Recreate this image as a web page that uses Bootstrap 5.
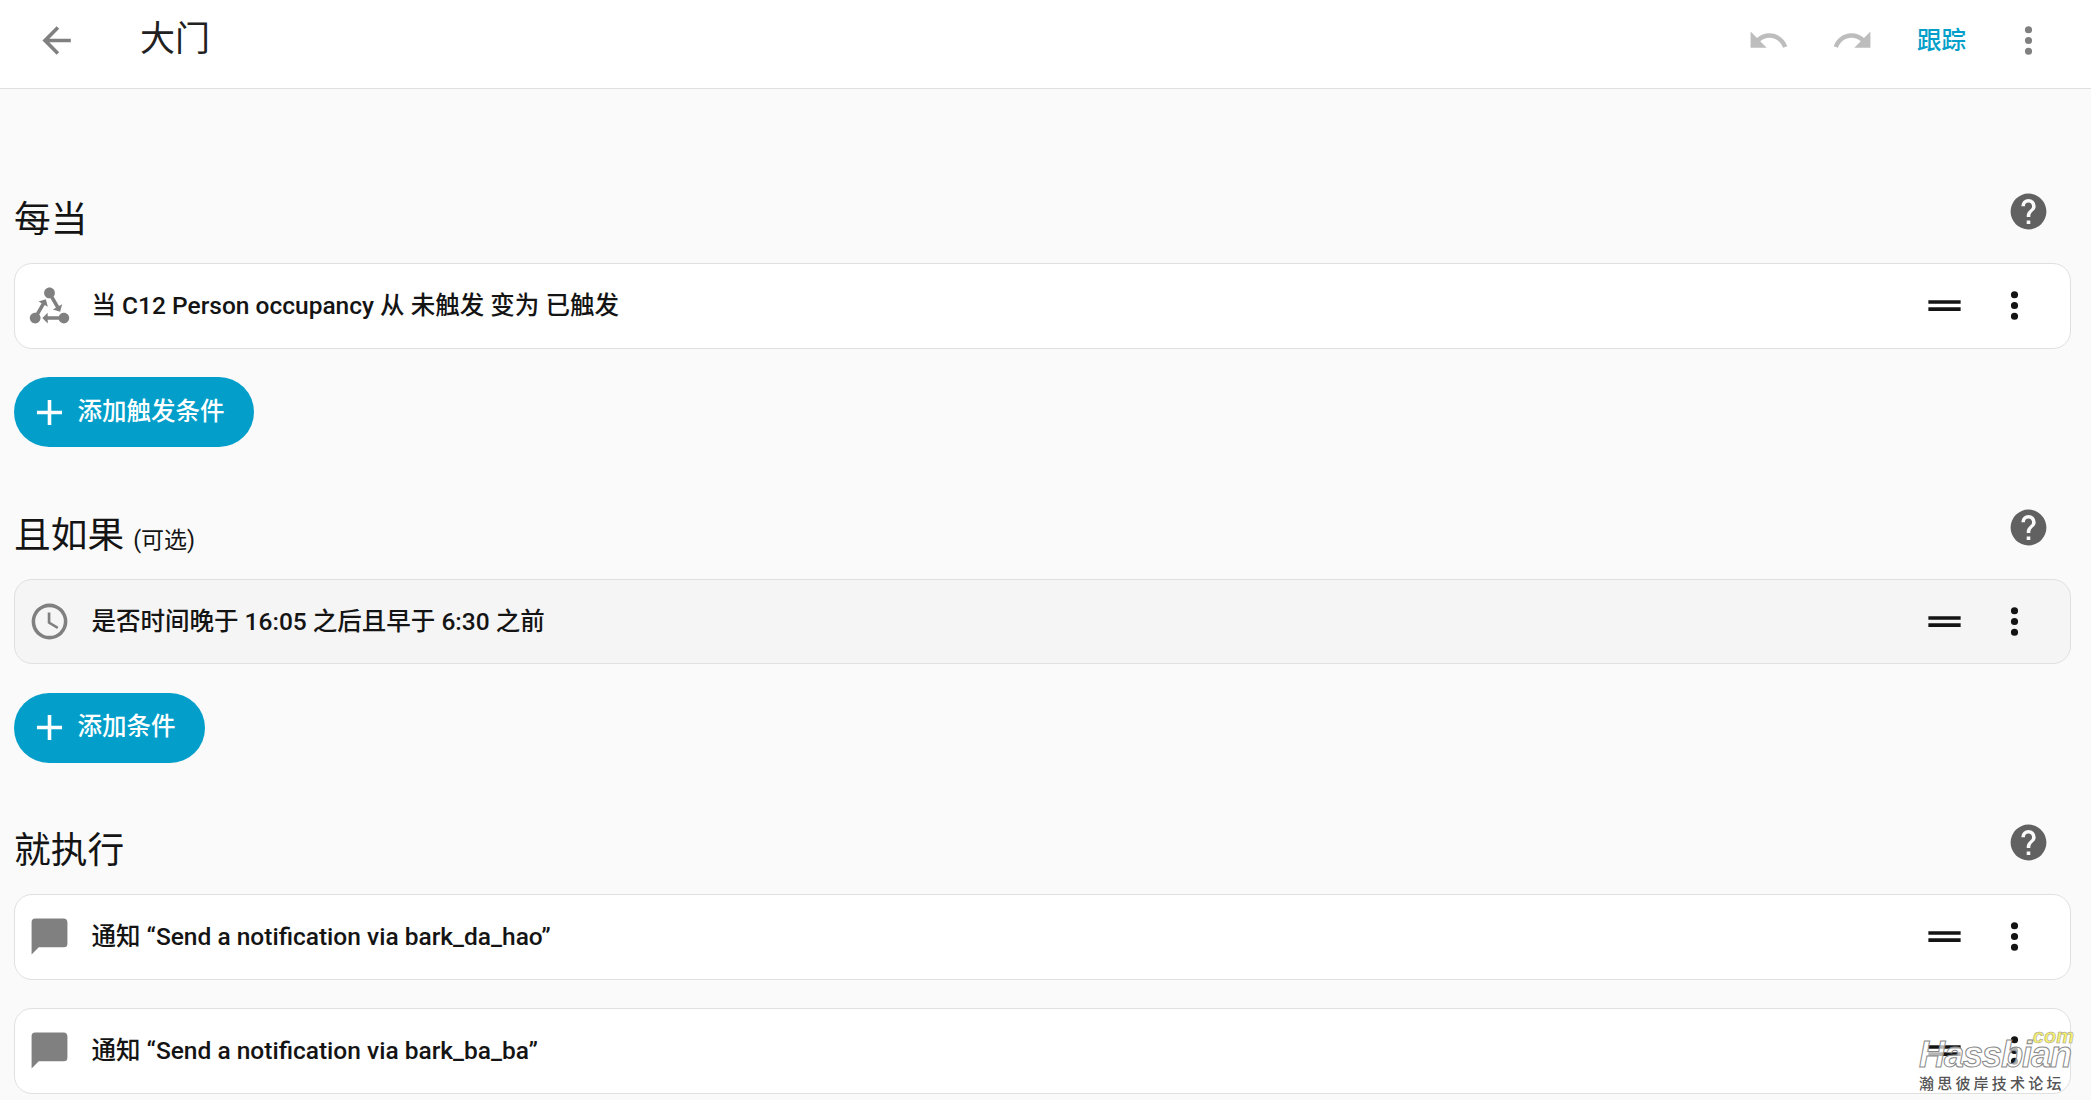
<!DOCTYPE html>
<html lang="zh-CN">
<head>
<meta charset="UTF-8">
<title>大门</title>
<link href="https://cdn.jsdelivr.net/npm/bootstrap@5.3.2/dist/css/bootstrap.min.css" rel="stylesheet">
<style>
html, body { height: 1100px; overflow: hidden; }
body { background: #fff; font-family: Roboto, "Noto Sans CJK SC", sans-serif; color: #141414; }
.app-shell { width: 2091px; height: 1100px; background: #fafafa; overflow: hidden; position: relative; border-top-right-radius: 6px; }
.top-bar { height: 89px; background: #fff; border-bottom: 1px solid #e0e0e0; padding: 0 41.5px 8px 34.5px; }
.top-title { font-size: 35px; font-weight: 400; margin: 0 0 0 62.5px; color: #212121; line-height: 40px; }
.ic { width: 43px; height: 43px; fill: currentColor; flex: none; display: block; }
.ic-muted { color: #808080; }
.ic-off { color: #bdbdbd; }
.ic-dark { color: #141414; }
.ic-help { color: #616161; margin-top: -4px; }
.hist-gap { margin-left: 41px; }
.trace-link { color: #039fca; font-size: 24.5px; font-weight: 500; text-decoration: none; margin: 2px 40.5px 0 43.5px; line-height: 1; }
.page-main { padding: 105px 20px 0 14px; }
.block-head { margin-bottom: 18px; padding-right: 21.5px; }
.block-title { font-size: 36.7px; line-height: 50px; font-weight: 400; margin: 1px 0 0; color: #141414; }
.block-title small { font-size: 23px; font-weight: 400; line-height: 1; }
.rule-row { height: 85.5px; background: #fff; border: 1.5px solid #e0e0e0; border-radius: 18px; margin-bottom: 28.5px; padding: 0 34px 0 13px; font-size: 24.5px; font-weight: 500; }
.rule-row.row-alt { background: #f5f5f5; }
.rule-text { margin-left: 20.5px; padding-top: 2px; }
.rule-drag { margin-right: 27px; }
.add-btn { height: 70px; width: fit-content; border-radius: 35px; background: #039fca; color: #fff; border: 0; font-size: 24.5px; font-weight: 500; padding: 0 29px 0 14px; }
.add-btn .ic { margin-right: 6.5px; }
.add-btn:hover { background: #039fca; color: #fff; }
.block-sec { margin-bottom: 62.5px; }
.wm-box { position: absolute; right: 17px; bottom: 8px; width: 155px; color: #666; }
.wm-com { font: italic 700 20px/12px "Liberation Sans", sans-serif; color: #f6f06c; -webkit-text-stroke: .5px #999; text-align: right; }
.wm-name { font: italic 700 36px/26px "Liberation Sans", sans-serif; color: rgba(255,255,255,.7); -webkit-text-stroke: 1px #888; letter-spacing: -1px; white-space: nowrap; }
.wm-sub { font: 500 15px/18px "Noto Sans CJK SC", sans-serif; letter-spacing: 3.2px; margin-top: 6px; color: #555; white-space: nowrap; }
</style>
</head>
<body>
<div class="app-shell">
    <header class="top-bar d-flex align-items-center">
        <svg class="ic ic-muted" viewBox="0 0 24 24"><path d="M20,11V13H8L13.5,18.5L12.08,19.92L4.16,12L12.08,4.08L13.5,5.5L8,11H20Z"/></svg>
        <h1 class="top-title">大门</h1>
        <div class="ms-auto d-flex align-items-center">
            <svg class="ic ic-off" viewBox="0 0 24 24"><path d="M12.5,8C9.85,8 7.45,9 5.6,10.6L2,7V16H11L7.38,12.38C8.77,11.22 10.54,10.5 12.5,10.5C16.04,10.5 19.05,12.81 20.1,16L22.47,15.22C21.08,11.03 17.15,8 12.5,8Z"/></svg>
            <svg class="ic ic-off hist-gap" viewBox="0 0 24 24"><path d="M18.4,10.6C16.55,9 14.15,8 11.5,8C6.85,8 2.92,11.03 1.54,15.22L3.9,16C4.95,12.81 7.95,10.5 11.5,10.5C13.45,10.5 15.23,11.22 16.62,12.38L13,16H22V7L18.4,10.6Z"/></svg>
            <a class="trace-link" href="#">跟踪</a>
            <svg class="ic ic-muted" viewBox="0 0 24 24"><path d="M12,16A2,2 0 0,1 14,18A2,2 0 0,1 12,20A2,2 0 0,1 10,18A2,2 0 0,1 12,16M12,10A2,2 0 0,1 14,12A2,2 0 0,1 12,14A2,2 0 0,1 10,12A2,2 0 0,1 12,10M12,4A2,2 0 0,1 14,6A2,2 0 0,1 12,8A2,2 0 0,1 10,6A2,2 0 0,1 12,4Z"/></svg>
        </div>
    </header>

    <main class="page-main">
        <section class="block-sec">
            <div class="block-head d-flex justify-content-between align-items-start">
                <h2 class="block-title">每当</h2>
                <svg class="ic ic-help" viewBox="0 0 24 24"><path d="M15.07,11.25L14.17,12.17C13.45,12.89 13,13.5 13,15H11V14.5C11,13.39 11.45,12.39 12.17,11.67L13.41,10.41C13.78,10.05 14,9.55 14,9C14,7.89 13.1,7 12,7A2,2 0 0,0 10,9H8A4,4 0 0,1 12,5A4,4 0 0,1 16,9C16,9.88 15.64,10.67 15.07,11.25M13,19H11V17H13M12,2A10,10 0 0,0 2,12A10,10 0 0,0 12,22A10,10 0 0,0 22,12C22,6.47 17.5,2 12,2Z"/></svg>
            </div>
            <div class="rule-row d-flex align-items-center">
                <svg class="ic ic-muted" viewBox="0 0 24 24"><path d="M6.27 17.05C6.72 17.58 7 18.25 7 19C7 20.66 5.66 22 4 22S1 20.66 1 19 2.34 16 4 16C4.18 16 4.36 16 4.53 16.05L7.6 10.69L5.86 9.7L9.95 8.58L11.07 12.67L9.33 11.68L6.27 17.05M20 16C18.7 16 17.6 16.84 17.18 18H11V16L8 19L11 22V20H17.18C17.6 21.16 18.7 22 20 22C21.66 22 23 20.66 23 19S21.66 16 20 16M12 8C12.18 8 12.36 8 12.53 7.95L15.6 13.31L13.86 14.3L17.95 15.42L19.07 11.33L17.33 12.32L14.27 6.95C14.72 6.42 15 5.75 15 5C15 3.34 13.66 2 12 2S9 3.34 9 5 10.34 8 12 8Z"/></svg>
                <span class="rule-text">当 C12 Person occupancy 从 未触发 变为 已触发</span>
                <svg class="ic ic-dark ms-auto rule-drag" viewBox="0 0 24 24"><path d="M21 11H3V9H21V11M21 13H3V15H21V13Z"/></svg>
                <svg class="ic ic-dark" viewBox="0 0 24 24"><path d="M12,16A2,2 0 0,1 14,18A2,2 0 0,1 12,20A2,2 0 0,1 10,18A2,2 0 0,1 12,16M12,10A2,2 0 0,1 14,12A2,2 0 0,1 12,14A2,2 0 0,1 10,12A2,2 0 0,1 12,10M12,4A2,2 0 0,1 14,6A2,2 0 0,1 12,8A2,2 0 0,1 10,6A2,2 0 0,1 12,4Z"/></svg>
            </div>
            <button class="btn add-btn d-flex align-items-center" type="button">
                <svg class="ic" viewBox="0 0 24 24"><path d="M19,13H13V19H11V13H5V11H11V5H13V11H19V13Z"/></svg>添加触发条件
            </button>
        </section>

        <section class="block-sec">
            <div class="block-head d-flex justify-content-between align-items-start">
                <h2 class="block-title">且如果 <small>(可选)</small></h2>
                <svg class="ic ic-help" viewBox="0 0 24 24"><path d="M15.07,11.25L14.17,12.17C13.45,12.89 13,13.5 13,15H11V14.5C11,13.39 11.45,12.39 12.17,11.67L13.41,10.41C13.78,10.05 14,9.55 14,9C14,7.89 13.1,7 12,7A2,2 0 0,0 10,9H8A4,4 0 0,1 12,5A4,4 0 0,1 16,9C16,9.88 15.64,10.67 15.07,11.25M13,19H11V17H13M12,2A10,10 0 0,0 2,12A10,10 0 0,0 12,22A10,10 0 0,0 22,12C22,6.47 17.5,2 12,2Z"/></svg>
            </div>
            <div class="rule-row row-alt d-flex align-items-center">
                <svg class="ic ic-muted" viewBox="0 0 24 24"><path d="M12,20A8,8 0 0,0 20,12A8,8 0 0,0 12,4A8,8 0 0,0 4,12A8,8 0 0,0 12,20M12,2A10,10 0 0,1 22,12A10,10 0 0,1 12,22C6.47,22 2,17.5 2,12A10,10 0 0,1 12,2M12.5,7V12.25L17,14.92L16.25,16.15L11,13V7H12.5Z"/></svg>
                <span class="rule-text">是否时间晚于 16:05 之后且早于 6:30 之前</span>
                <svg class="ic ic-dark ms-auto rule-drag" viewBox="0 0 24 24"><path d="M21 11H3V9H21V11M21 13H3V15H21V13Z"/></svg>
                <svg class="ic ic-dark" viewBox="0 0 24 24"><path d="M12,16A2,2 0 0,1 14,18A2,2 0 0,1 12,20A2,2 0 0,1 10,18A2,2 0 0,1 12,16M12,10A2,2 0 0,1 14,12A2,2 0 0,1 12,14A2,2 0 0,1 10,12A2,2 0 0,1 12,10M12,4A2,2 0 0,1 14,6A2,2 0 0,1 12,8A2,2 0 0,1 10,6A2,2 0 0,1 12,4Z"/></svg>
            </div>
            <button class="btn add-btn d-flex align-items-center" type="button">
                <svg class="ic" viewBox="0 0 24 24"><path d="M19,13H13V19H11V13H5V11H11V5H13V11H19V13Z"/></svg>添加条件
            </button>
        </section>

        <section class="block-sec">
            <div class="block-head d-flex justify-content-between align-items-start">
                <h2 class="block-title">就执行</h2>
                <svg class="ic ic-help" viewBox="0 0 24 24"><path d="M15.07,11.25L14.17,12.17C13.45,12.89 13,13.5 13,15H11V14.5C11,13.39 11.45,12.39 12.17,11.67L13.41,10.41C13.78,10.05 14,9.55 14,9C14,7.89 13.1,7 12,7A2,2 0 0,0 10,9H8A4,4 0 0,1 12,5A4,4 0 0,1 16,9C16,9.88 15.64,10.67 15.07,11.25M13,19H11V17H13M12,2A10,10 0 0,0 2,12A10,10 0 0,0 12,22A10,10 0 0,0 22,12C22,6.47 17.5,2 12,2Z"/></svg>
            </div>
            <div class="rule-row d-flex align-items-center">
                <svg class="ic ic-muted" viewBox="0 0 24 24"><path d="M20,2H4A2,2 0 0,0 2,4V22L6,18H20A2,2 0 0,0 22,16V4C22,2.89 21.1,2 20,2Z"/></svg>
                <span class="rule-text">通知 “Send a notification via bark_da_hao”</span>
                <svg class="ic ic-dark ms-auto rule-drag" viewBox="0 0 24 24"><path d="M21 11H3V9H21V11M21 13H3V15H21V13Z"/></svg>
                <svg class="ic ic-dark" viewBox="0 0 24 24"><path d="M12,16A2,2 0 0,1 14,18A2,2 0 0,1 12,20A2,2 0 0,1 10,18A2,2 0 0,1 12,16M12,10A2,2 0 0,1 14,12A2,2 0 0,1 12,14A2,2 0 0,1 10,12A2,2 0 0,1 12,10M12,4A2,2 0 0,1 14,6A2,2 0 0,1 12,8A2,2 0 0,1 10,6A2,2 0 0,1 12,4Z"/></svg>
            </div>
            <div class="rule-row d-flex align-items-center">
                <svg class="ic ic-muted" viewBox="0 0 24 24"><path d="M20,2H4A2,2 0 0,0 2,4V22L6,18H20A2,2 0 0,0 22,16V4C22,2.89 21.1,2 20,2Z"/></svg>
                <span class="rule-text">通知 “Send a notification via bark_ba_ba”</span>
                <svg class="ic ic-dark ms-auto rule-drag" viewBox="0 0 24 24"><path d="M21 11H3V9H21V11M21 13H3V15H21V13Z"/></svg>
                <svg class="ic ic-dark" viewBox="0 0 24 24"><path d="M12,16A2,2 0 0,1 14,18A2,2 0 0,1 12,20A2,2 0 0,1 10,18A2,2 0 0,1 12,16M12,10A2,2 0 0,1 14,12A2,2 0 0,1 12,14A2,2 0 0,1 10,12A2,2 0 0,1 12,10M12,4A2,2 0 0,1 14,6A2,2 0 0,1 12,8A2,2 0 0,1 10,6A2,2 0 0,1 12,4Z"/></svg>
            </div>
        </section>
    </main>

    <div class="wm-box">
        <div class="wm-com">.com</div>
        <div class="wm-name">Hassbian</div>
        <div class="wm-sub">瀚思彼岸技术论坛</div>
    </div>
</div>
<script src="https://cdn.jsdelivr.net/npm/bootstrap@5.3.2/dist/js/bootstrap.bundle.min.js"></script>
</body>
</html>
